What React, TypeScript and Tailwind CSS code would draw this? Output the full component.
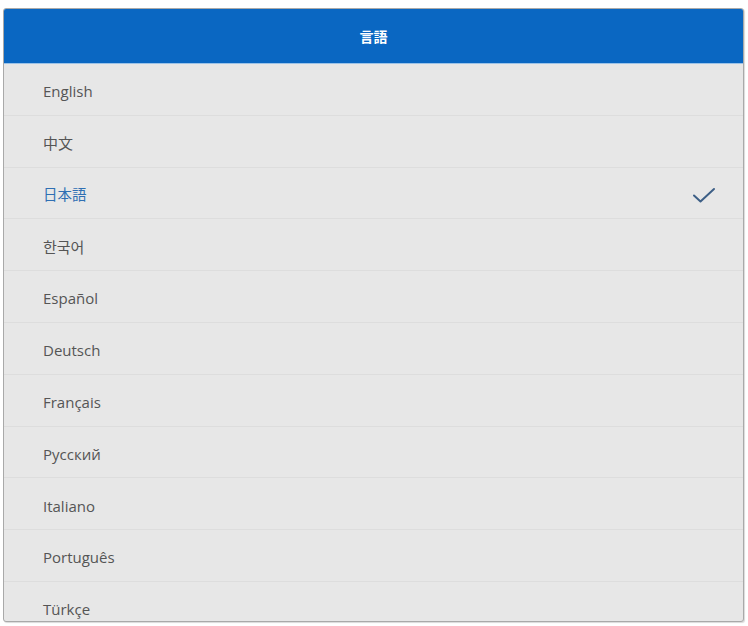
import React from "react";

const langs = [
  "English",
  "中文",
  "日本語",
  "한국어",
  "Español",
  "Deutsch",
  "Français",
  "Русский",
  "Italiano",
  "Português",
  "Türkçe",
];

export default function App() {
  return (
    <div
      className="w-[748px] h-[626px] bg-white pt-[8px] pl-[3px] overflow-hidden"
      style={{ fontFamily: '"Open Sans", "Noto Sans CJK JP", "Noto Sans CJK KR", sans-serif' }}
    >
      <div className="w-[741px] h-[614px] rounded-[3px] border border-[#a9a9a9] overflow-hidden bg-[#e7e7e7] shadow-[1px_1px_1px_rgba(0,0,0,0.15)]">
        <div className="h-[55px] bg-[#0a67c2] flex items-center justify-center border-b border-[#9cc3e8]">
          <span className="text-white text-[14px] font-bold">言語</span>
        </div>
        {langs.map((l, i) => (
          <div
            key={l}
            className="h-[51.8px] flex items-center justify-between pl-[39px] pr-[27px] pt-[4px] border-b border-[#dddddd]"
          >
            <span
              className={
                i === 2
                  ? "text-[14.5px] text-[#2f6fb3]"
                  : "text-[15px] text-[#555555]"
              }
            >
              {l}
            </span>
            {i === 2 && (
              <svg width="24" height="18" viewBox="0 0 24 18" fill="none">
                <path
                  d="M2 9.5 L8.5 15.5 L22 3"
                  stroke="#3d5f86"
                  strokeWidth="2"
                  strokeLinecap="round"
                  strokeLinejoin="round"
                />
              </svg>
            )}
          </div>
        ))}
      </div>
    </div>
  );
}
